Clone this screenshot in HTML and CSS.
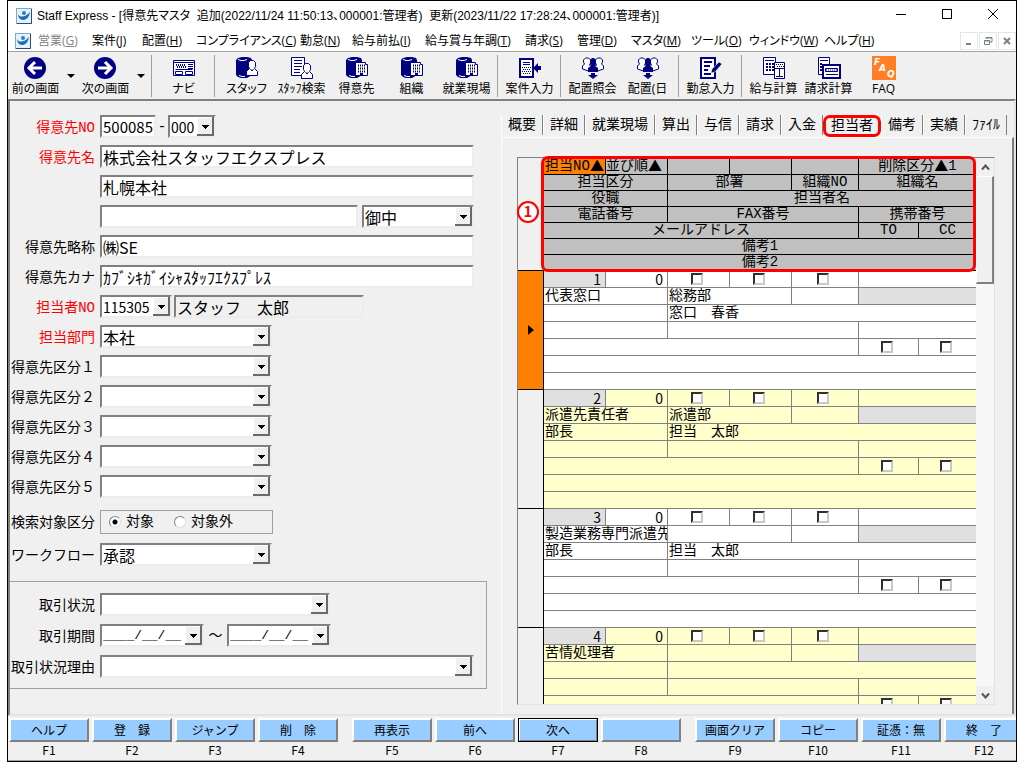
FILE: index.html
```html
<!DOCTYPE html>
<html lang="ja">
<head>
  <meta charset="UTF-8" />
  <meta name="viewport" content="width=device-width, initial-scale=1.0"/>
  <title>Staff Express - 得意先マスタ</title>
  <link rel="stylesheet" href="styles.css">
</head>
<body>
  <!-- アイコン定義 -->
  <svg class="defs" aria-hidden="true">
    <symbol id="app" viewBox="0 0 16 16">
      <rect x="0.5" y="0.5" width="15" height="15" fill="#e4f1fa" stroke="#7fa9cc"/>
      <path d="M15.500 1v14.500H1" fill="none" stroke="#1f4f86"/>
      <path d="M2 6c1 3 5 3 6 2 2 0 4-2 6-4-1 6-4 8-7 8-3 0-5-3-5-6z" fill="#1b6fb5"/>
      <circle cx="8" cy="5" r="2" fill="#2c7fc0"/>
    </symbol>
    <symbol id="binder" viewBox="0 0 24 24">
      <path d="M1 4l2-2 4-1h5l4 1 1 2v15l-5 3H6l-3-1-2-2z" fill="#000080"/>
      <path d="M3 3.500l3 1h3l3-1" fill="none" stroke="#fff"/>
      <path d="M4 19.500l3 1h3" fill="none" stroke="#fff"/>
    </symbol>
    <symbol id="person" viewBox="0 0 24 24">
      <path d="M11.500 19.500v-4l3-3-1-2v-4l2-2h3l2 2v4l-1 2 3 3v4z" fill="#fff" stroke="#000080"/>
      <path d="M15.500 13l1.500 2 1.500-2" fill="none" stroke="#000080"/>
    </symbol>
    <symbol id="client" viewBox="0 0 24 24">
      <use href="#binder"/>
      <path d="M10.500 19.500v-13h10v2h2v11z" fill="#fff" stroke="#000080"/>
      <path d="M13 9.500h7M13 12.500h7M13 15.500h7" stroke="#000080" stroke-width="2" stroke-dasharray="1 1"/>
      <rect x="15" y="17" width="3" height="3" fill="#000080"/>
    </symbol>
    <symbol id="placement" viewBox="0 0 24 24">
      <g fill="#fff" stroke="#000080">
        <path d="M1.500 13v-3l2-2-1-2V4l2-2h3l2 2v3l-1 2 2 2v3l-3 1z"/>
        <path d="M22.500 13v-3l-2-2 1-2V4l-2-2h-3l-2 2v3l1 2-2 2v3l3 1z"/>
      </g>
      <path d="M7 16v-4l3-2-1-2V4l2-2h2l2 2v4l-1 2 3 2v4z" fill="#000080"/>
      <path d="M10 17h4v2h3l-5 4-5-4h3z" fill="#000080"/>
    </symbol>
  </svg>

  <div class="window">
    <header class="titlebar">
      <svg class="app-icon"><use href="#app"/></svg>
      <h1>Staff Express - [得意先マスタ&nbsp; 追加(2022/11/24 11:50:13、000001:管理者)&nbsp; 更新(2023/11/22 17:28:24、000001:管理者)]</h1>
      <div class="window-buttons">
        <button aria-label="最小化"><svg width="12" height="12"><path d="M1 6.500h10" stroke="#000"/></svg></button>
        <button aria-label="最大化"><svg width="12" height="12"><rect x="1.500" y="1.500" width="9" height="9" fill="none" stroke="#000"/></svg></button>
        <button aria-label="閉じる"><svg width="12" height="12"><path d="M1 1l10 10M11 1L1 11" stroke="#000"/></svg></button>
      </div>
    </header>

    <nav class="menubar">
      <svg class="app-icon"><use href="#app"/></svg>
      <div class="menus">
        <button disabled>営業(<u>G</u>)</button>
        <button>案件(<u>J</u>)</button>
        <button>配置(<u>H</u>)</button>
        <button>コンプライアンス(<u>C</u>)</button>
        <button>勤怠(<u>N</u>)</button>
        <button>給与前払(<u>I</u>)</button>
        <button>給与賞与年調(<u>T</u>)</button>
        <button>請求(<u>S</u>)</button>
        <button>管理(<u>D</u>)</button>
        <button>マスタ(<u>M</u>)</button>
        <button>ツール(<u>O</u>)</button>
        <button>ウィンドウ(<u>W</u>)</button>
        <button>ヘルプ(<u>H</u>)</button>
      </div>
      <div class="mdi-buttons">
        <button aria-label="最小化"><svg width="10" height="10"><path d="M2 8h5" stroke="#75828e" stroke-width="2"/></svg></button>
        <button aria-label="元に戻す"><svg width="10" height="10"><path d="M3 3V1.500h6V6H7M3 2h6M1.500 4.500h5v4h-5zM1 5h6" fill="none" stroke="#75828e"/></svg></button>
        <button aria-label="閉じる"><svg width="10" height="10"><path d="M2 2l6 6M8 2L2 8" stroke="#75828e" stroke-width="2"/></svg></button>
      </div>
    </nav>

    <div class="toolbar">
      <button class="tool">
        <svg><circle cx="11" cy="12" r="11" fill="#000080"/><path d="M5 12h13M11 6l-6 6 6 6" fill="none" stroke="#fff" stroke-width="3"/></svg>
        前の画面
      </button>
      <button class="drop" aria-label="前の画面の履歴"></button>
      <button class="tool">
        <svg><circle cx="11" cy="12" r="11" fill="#000080"/><path d="M4 12h13M11 6l6 6-6 6" fill="none" stroke="#fff" stroke-width="3"/></svg>
        次の画面
      </button>
      <button class="drop" aria-label="次の画面の履歴"></button>
      <span class="sep"></span>
      <button class="tool">
        <svg>
          <path d="M1.500 4.500h21v15h-21zM1 6.500h22M3.500 13.500h17M3.500 15.500h7v3h-7zM13.500 15.500h7v3h-7z" fill="#fff" stroke="#000080"/>
          <path d="M4 9h10M5 11h10" stroke="#000080" stroke-width="2" stroke-dasharray="1 1"/>
          <path d="M16 8.500h5M16 10.500h5M16 12.500h5" stroke="#000080"/>
        </svg>
        ナビ
      </button>
      <span class="sep"></span>
      <button class="tool"><svg><use href="#binder"/><use href="#person"/></svg>スタッフ</button>
      <button class="tool">
        <svg>
          <path d="M1.500 1.500h13v18h-13z" fill="#fff" stroke="#000080"/>
          <path d="M4 4.500h8M4 7.500h8M4 10.500h8M4 13.500h6M4 16.500h6" stroke="#000080"/>
          <use href="#person" y="3"/>
        </svg>
        ｽﾀｯﾌ検索
      </button>
      <button class="tool"><svg><use href="#client"/></svg>得意先</button>
      <button class="tool"><svg><use href="#client"/></svg>組織</button>
      <button class="tool"><svg><use href="#client"/></svg>就業現場</button>
      <span class="sep"></span>
      <button class="tool">
        <svg>
          <rect x="2" y="3" width="13" height="18" fill="#fff" stroke="#000080" stroke-width="2"/>
          <path d="M5 6.500h7M5 8.500h7" stroke="#000080"/>
          <path d="M4 11.500h9M5 13.500h8M4 15.500h9M5 17.500h8" stroke="#000080" stroke-dasharray="1 1"/>
          <path d="M15 12l5-5v3h3v4h-3v3z" fill="#000080"/>
        </svg>
        案件入力
      </button>
      <span class="sep"></span>
      <button class="tool"><svg><use href="#placement"/></svg>配置照会</button>
      <button class="tool"><svg><use href="#placement"/></svg>配置(日</button>
      <span class="sep"></span>
      <button class="tool">
        <svg>
          <path d="M2 2h14v20H2z" fill="#fff" stroke="#000080" stroke-width="2"/>
          <path d="M5 6h8M5 10h6M5 14h4M5 18h7" stroke="#000080" stroke-width="2"/>
          <path d="M12 17l1-4 7-7 3 2-7 8z" fill="#000080" stroke="#fff" stroke-width="0.500"/>
        </svg>
        勤怠入力
      </button>
      <span class="sep"></span>
      <button class="tool">
        <svg>
          <path d="M1.500 1.500h12v17h-12zM3 4.500h9" fill="#fff" stroke="#000080"/>
          <path d="M4 8h8M4 11h8M4 14h8" stroke="#000080" stroke-width="2" stroke-dasharray="2 1"/>
          <path d="M12.500 6.500h10v16h-10zM12 12.500h11M17.500 12v8M14 20.500h7" fill="#fff" stroke="#000080"/>
          <path d="M14 8.500h7M15 10.500h7" stroke="#000080" stroke-dasharray="1 1"/>
        </svg>
        給与計算
      </button>
      <button class="tool">
        <svg>
          <path d="M1.500 1.500h11v17h-11zM3 4.500h8" fill="#fff" stroke="#000080"/>
          <path d="M3 8h3M3 11h3M3 14h3" stroke="#000080" stroke-width="2" stroke-dasharray="2 1"/>
          <rect x="6" y="9" width="17" height="13" fill="#fff" stroke="#000080" stroke-width="2"/>
          <path d="M8.500 12.500h12v3h-12zM9 18.500h12" fill="none" stroke="#000080"/>
          <path d="M9 14h11" stroke="#000080" stroke-dasharray="1 1"/>
        </svg>
        請求計算
      </button>
      <button class="tool">
        <svg>
          <rect width="24" height="24" fill="#ff7f27"/>
          <g class="faq"><text x="2" y="9">F</text><text x="7" y="15">A</text><text x="15" y="21">Q</text></g>
        </svg>
        FAQ
      </button>
    </div>

    <main class="content">
      <form class="customer">
        <div class="row">
          <label class="required" for="customerNo">得意先NO</label>
          <input id="customerNo" class="field w-no" value="500085">
          <span>-</span>
          <select class="field combo w-branch" aria-label="枝番"><option>000</option></select>
        </div>
        <div class="row">
          <label class="required" for="customerName">得意先名</label>
          <input id="customerName" class="field w-full" value="株式会社スタッフエクスプレス">
        </div>
        <div class="row">
          <label></label>
          <input class="field w-full" aria-label="得意先名2" value="札幌本社">
        </div>
        <div class="row">
          <label></label>
          <input class="field w-name3" aria-label="得意先名3">
          <select class="field combo w-honor" aria-label="敬称"><option>御中</option></select>
        </div>
        <div class="row">
          <label for="shortName">得意先略称</label>
          <input id="shortName" class="field w-full" value="㈱SE">
        </div>
        <div class="row">
          <label for="kana">得意先カナ</label>
          <input id="kana" class="field w-full" value="ｶﾌﾞｼｷｶﾞｲｼｬｽﾀｯﾌｴｸｽﾌﾟﾚｽ">
        </div>
        <div class="row">
          <label class="required" for="staffNo">担当者NO</label>
          <select id="staffNo" class="field combo w-staff"><option>115305</option></select>
          <input class="field w-staffname" aria-label="担当者名" value="スタッフ　太郎" readonly>
        </div>
        <div class="row">
          <label class="required" for="dept">担当部門</label>
          <select id="dept" class="field combo w-kubun"><option>本社</option></select>
        </div>
        <div class="row">
          <label for="kubun1">得意先区分１</label>
          <select id="kubun1" class="field combo w-kubun"><option></option></select>
        </div>
        <div class="row">
          <label for="kubun2">得意先区分２</label>
          <select id="kubun2" class="field combo w-kubun"><option></option></select>
        </div>
        <div class="row">
          <label for="kubun3">得意先区分３</label>
          <select id="kubun3" class="field combo w-kubun"><option></option></select>
        </div>
        <div class="row">
          <label for="kubun4">得意先区分４</label>
          <select id="kubun4" class="field combo w-kubun"><option></option></select>
        </div>
        <div class="row">
          <label for="kubun5">得意先区分５</label>
          <select id="kubun5" class="field combo w-kubun"><option></option></select>
        </div>
        <div class="row search-row">
          <span class="caption">検索対象区分</span>
          <div class="radios">
            <label><input type="radio" name="target" checked>対象</label>
            <label><input type="radio" name="target">対象外</label>
          </div>
        </div>
        <div class="row">
          <label for="workflow">ワークフロー</label>
          <select id="workflow" class="field combo w-kubun"><option>承認</option></select>
        </div>

        <div class="deal">
          <div class="row">
            <label for="dealState">取引状況</label>
            <select id="dealState" class="field combo w-deal"><option></option></select>
          </div>
          <div class="row">
            <label for="dealFrom">取引期間</label>
            <input id="dealFrom" class="field combo date" value="____/__/__">
            <span>～</span>
            <input class="field combo date" aria-label="取引期間 終了" value="____/__/__">
          </div>
          <div class="row">
            <label for="dealReason">取引状況理由</label>
            <select id="dealReason" class="field combo w-full"><option></option></select>
          </div>
        </div>
      </form>

      <section class="detail">
        <div class="tabs" role="tablist">
          <button role="tab">概要</button>
          <button role="tab">詳細</button>
          <button role="tab">就業現場</button>
          <button role="tab">算出</button>
          <button role="tab">与信</button>
          <button role="tab">請求</button>
          <button role="tab">入金</button>
          <button role="tab" class="marked" aria-selected="true">担当者</button>
          <button role="tab">備考</button>
          <button role="tab">実績</button>
          <button role="tab">ﾌｧｲﾙ</button>
        </div>
        <div class="tab-page">
          <div class="grid">
            <div class="grid-body">
              <table>
                <colgroup>
                  <col class="c-head"><col class="c-std"><col class="c-std"><col class="c-std"><col class="c-std"><col class="c-org"><col class="c-to"><col>
                </colgroup>
                <thead>
                  <tr><td rowspan="7" class="corner"></td><th class="sorted">担当NO<i>▲</i></th><th class="left">並び順<i>▲</i></th><th></th><th></th><th></th><th colspan="2">削除区分<i>▲</i>1</th></tr>
                  <tr><th colspan="2">担当区分</th><th colspan="2">部署</th><th>組織NO</th><th colspan="2">組織名</th></tr>
                  <tr><th colspan="2">役職</th><th colspan="5">担当者名</th></tr>
                  <tr><th colspan="2">電話番号</th><th colspan="3">FAX番号</th><th colspan="2">携帯番号</th></tr>
                  <tr><th colspan="5">メールアドレス</th><th>TO</th><th>CC</th></tr>
                  <tr><th colspan="7">備考1</th></tr>
                  <tr><th colspan="7">備考2</th></tr>
                </thead>
                <tbody>
                  <tr><td rowspan="7" class="rowhead current"></td><td class="num lock">1</td><td class="num">0</td><td class="chk"><input type="checkbox" aria-label="区分1"></td><td class="chk"><input type="checkbox" aria-label="区分2"></td><td class="chk"><input type="checkbox" aria-label="区分3"></td><td colspan="2"></td></tr>
                  <tr><td colspan="2">代表窓口</td><td colspan="2">総務部</td><td></td><td colspan="2" class="lock"></td></tr>
                  <tr><td colspan="2"></td><td colspan="5">窓口　春香</td></tr>
                  <tr><td colspan="2"></td><td colspan="3"></td><td colspan="2"></td></tr>
                  <tr><td colspan="5"></td><td class="chk"><input type="checkbox" aria-label="TO"></td><td class="chk"><input type="checkbox" aria-label="CC"></td></tr>
                  <tr><td colspan="7"></td></tr>
                  <tr><td colspan="7"></td></tr>
                </tbody>
                <tbody class="alt">
                  <tr><td rowspan="7" class="rowhead"></td><td class="num lock">2</td><td class="num">0</td><td class="chk"><input type="checkbox" aria-label="区分1"></td><td class="chk"><input type="checkbox" aria-label="区分2"></td><td class="chk"><input type="checkbox" aria-label="区分3"></td><td colspan="2"></td></tr>
                  <tr><td colspan="2">派遣先責任者</td><td colspan="2">派遣部</td><td></td><td colspan="2" class="lock"></td></tr>
                  <tr><td colspan="2">部長</td><td colspan="5">担当　太郎</td></tr>
                  <tr><td colspan="2"></td><td colspan="3"></td><td colspan="2"></td></tr>
                  <tr><td colspan="5"></td><td class="chk"><input type="checkbox" aria-label="TO"></td><td class="chk"><input type="checkbox" aria-label="CC"></td></tr>
                  <tr><td colspan="7"></td></tr>
                  <tr><td colspan="7"></td></tr>
                </tbody>
                <tbody>
                  <tr><td rowspan="7" class="rowhead"></td><td class="num lock">3</td><td class="num">0</td><td class="chk"><input type="checkbox" aria-label="区分1"></td><td class="chk"><input type="checkbox" aria-label="区分2"></td><td class="chk"><input type="checkbox" aria-label="区分3"></td><td colspan="2"></td></tr>
                  <tr><td colspan="2">製造業務専門派遣先</td><td colspan="2"></td><td></td><td colspan="2" class="lock"></td></tr>
                  <tr><td colspan="2">部長</td><td colspan="5">担当　太郎</td></tr>
                  <tr><td colspan="2"></td><td colspan="3"></td><td colspan="2"></td></tr>
                  <tr><td colspan="5"></td><td class="chk"><input type="checkbox" aria-label="TO"></td><td class="chk"><input type="checkbox" aria-label="CC"></td></tr>
                  <tr><td colspan="7"></td></tr>
                  <tr><td colspan="7"></td></tr>
                </tbody>
                <tbody class="alt">
                  <tr><td rowspan="7" class="rowhead"></td><td class="num lock">4</td><td class="num">0</td><td class="chk"><input type="checkbox" aria-label="区分1"></td><td class="chk"><input type="checkbox" aria-label="区分2"></td><td class="chk"><input type="checkbox" aria-label="区分3"></td><td colspan="2"></td></tr>
                  <tr><td colspan="2">苦情処理者</td><td colspan="2"></td><td></td><td colspan="2" class="lock"></td></tr>
                  <tr><td colspan="2"></td><td colspan="5"></td></tr>
                  <tr><td colspan="2"></td><td colspan="3"></td><td colspan="2"></td></tr>
                  <tr><td colspan="5"></td><td class="chk"><input type="checkbox" aria-label="TO"></td><td class="chk"><input type="checkbox" aria-label="CC"></td></tr>
                  <tr><td colspan="7"></td></tr>
                  <tr><td colspan="7"></td></tr>
                </tbody>
              </table>
            </div>
            <div class="scrollbar">
              <button type="button" aria-label="上へ"><svg width="9" height="7"><path d="M1 5.500l3.500-4 3.500 4" fill="none" stroke="#555" stroke-width="2"/></svg></button>
              <div class="thumb"></div>
              <button type="button" class="down" aria-label="下へ"><svg width="9" height="7"><path d="M1 1.500l3.500 4 3.500-4" fill="none" stroke="#555" stroke-width="2"/></svg></button>
            </div>
            <!-- 見出し部の説明枠 -->
            <div class="callout"></div>
            <svg class="callout-no" viewBox="0 0 22 22">
              <circle cx="11" cy="11" r="10" fill="#fff" stroke="#f00" stroke-width="2"/>
              <text x="11" y="16" text-anchor="middle">1</text>
            </svg>
          </div>
        </div>
      </section>
    </main>

    <footer class="fkeys">
      <div class="fgroup">
        <div class="fkey"><button>ヘルプ</button><span>F1</span></div>
        <div class="fkey"><button>登　録</button><span>F2</span></div>
        <div class="fkey"><button>ジャンプ</button><span>F3</span></div>
        <div class="fkey"><button>削　除</button><span>F4</span></div>
      </div>
      <div class="fgroup">
        <div class="fkey"><button>再表示</button><span>F5</span></div>
        <div class="fkey"><button>前へ</button><span>F6</span></div>
        <div class="fkey"><button class="default">次へ</button><span>F7</span></div>
        <div class="fkey"><button aria-label="F8"></button><span>F8</span></div>
      </div>
      <div class="fgroup">
        <div class="fkey"><button>画面クリア</button><span>F9</span></div>
        <div class="fkey"><button>コピー</button><span>F10</span></div>
        <div class="fkey"><button>証憑：無</button><span>F11</span></div>
        <div class="fkey"><button>終　了</button><span>F12</span></div>
      </div>
    </footer>
  </div>
</body>
</html>
```

FILE: styles.css
```css
* {
  box-sizing: border-box;
}

body {
  margin: 0;
  background-color: white;
  color: black;
  font-family: "Liberation Mono", "Noto Sans CJK JP", monospace;
  font-size: 14px;
  line-height: 16px;
}

button {
  margin: 0;
  padding: 0;
  border: 0;
  background: none;
  color: inherit;
  font: inherit;
}

.defs {
  display: none;
}

.window {
  display: flex;
  flex-direction: column;
  height: 100vh;
  margin: 0 6px 0 7px;
  border: 1px solid black;
  background-color: #f0f0f0;
  overflow: hidden;
}

/* タイトルバー・メニュー */
.titlebar, .menubar, .toolbar {
  font-family: "Open Sans", "Noto Sans CJK JP", sans-serif;
  font-size: 12px;
  font-feature-settings: "palt";
}

.titlebar, .menubar {
  display: flex;
  align-items: center;
  flex: none;
  background-color: white;
}

.titlebar {
  height: 29px;
  padding-left: 8px;
}

.titlebar h1 {
  flex: 1;
  margin: 0 0 0 5px;
  font-family: "Liberation Sans", "Noto Sans CJK JP", sans-serif;
  font-size: 12px;
  font-weight: normal;
  white-space: nowrap;
}

.app-icon {
  flex: none;
  width: 16px;
  height: 16px;
}

.window-buttons {
  display: flex;
}

.window-buttons button {
  width: 46px;
  height: 28px;
}

.menubar {
  height: 21px;
  padding-left: 7px;
}

.menus {
  display: grid;
  grid-template-columns: 54px 50px 54px 104px 52px 73px 100px 52px 54px 60px 58px 75px 60px;
  flex: 1;
  margin-left: 7px;
}

.menus button {
  text-align: left;
  white-space: nowrap;
}

.menus button:disabled {
  color: #838383;
}

.mdi-buttons {
  display: flex;
  gap: 1px;
}

.mdi-buttons button {
  display: flex;
  align-items: center;
  justify-content: center;
  width: 18px;
  height: 18px;
  border: 1px solid #e5e5e5;
}

/* ツールバー */
.toolbar {
  display: flex;
  flex: none;
  height: 48px;
  border-top: 1px solid #a0a0a0;
}

.tool {
  display: flex;
  flex-direction: column;
  align-items: center;
  gap: 1px;
  flex: 0 0 55px;
  padding-top: 4px;
  white-space: nowrap;
}

.tool svg {
  width: 24px;
  height: 24px;
}

.faq {
  fill: white;
  font: italic bold 9px "DejaVu Sans", sans-serif;
}

.drop {
  display: flex;
  align-items: center;
  justify-content: center;
  flex: 0 0 15px;
}

.drop::before {
  content: "";
  border: 4px solid transparent;
  border-top-color: black;
  border-bottom: 0;
}

.sep {
  flex: 0 0 8px;
  margin: 3px 0 2px;
  background: linear-gradient(#a0a0a0, #a0a0a0) 3px 0 / 1px 100% no-repeat;
}

/* 本体 */
.content {
  display: grid;
  grid-template-columns: minmax(0, 491px) minmax(0, 1fr);
  flex: 1;
  min-height: 0;
  border: 2px solid;
  border-color: #808080 #e3e3e3 #e3e3e3 #808080;
}

.customer {
  display: flex;
  flex-direction: column;
  gap: 7px;
  padding-top: 14px;
}

.row {
  display: flex;
  align-items: center;
  height: 23px;
}

.row > label, .caption {
  flex: 0 0 85px;
  margin-right: 5px;
  padding-top: 3px;
  text-align: right;
  white-space: nowrap;
}

.row > span:not(.caption) {
  flex: 0 0 12px;
  text-align: center;
}

.required {
  color: red;
}

.field {
  height: 23px;
  margin: 0;
  padding: 0 1px;
  border: 2px solid;
  border-color: #808080 #ececec #ececec #808080;
  border-radius: 0;
  background-color: white;
  color: black;
  font-family: "Noto Sans CJK JP", sans-serif;
  font-size: 16px;
  line-height: 18px;
}

.field[readonly] {
  background-color: #f0f0f0;
}

.combo {
  appearance: none;
  padding-right: 17px;
  background-image: url("data:image/svg+xml,%3Csvg xmlns='http://www.w3.org/2000/svg' width='17' height='19'%3E%3Cpath fill='%23696969' d='M0 0h17v19H0z'/%3E%3Cpath fill='%23fff' d='M0 0h15v17H0z'/%3E%3Cpath fill='%23f0f0f0' d='M1 1h14v16H1z'/%3E%3Cpath d='M5 8h7v1h-1v1h-1v1h-1v1H8v-1H7v-1H6V9H5z'/%3E%3C/svg%3E");
  background-repeat: no-repeat;
  background-position: right top;
}

.w-full { width: 374px; }
.w-no { width: 56px; font-size: 15px; }
.w-branch { width: 48px; font-size: 14px; }
.w-name3 { width: 258px; }
.w-honor { width: 112px; margin-left: 4px; }
.w-staff { width: 72px; font-size: 14px; }
.w-staffname { width: 190px; margin-left: 2px; }
.w-kubun { width: 172px; }
.w-deal { width: 230px; }

.date {
  width: 104px;
  font-family: "Liberation Mono", monospace;
  font-size: 13px;
}

.search-row {
  margin: 5px 0 3px;
}

.radios {
  display: flex;
  align-items: center;
  gap: 20px;
  width: 173px;
  height: 24px;
  padding-left: 8px;
  border: 1px solid #a0a0a0;
}

.radios label {
  display: flex;
  align-items: center;
  gap: 5px;
}

.radios input {
  appearance: none;
  width: 12px;
  height: 12px;
  margin: 0;
  border: 1px solid;
  border-color: #808080 #e0e0e0 #e0e0e0 #808080;
  border-radius: 50%;
  background-color: white;
}

.radios input:checked {
  background-image: radial-gradient(circle, black 2px, transparent 3px);
}

.deal {
  display: flex;
  flex-direction: column;
  gap: 8px;
  width: 477px;
  margin-top: 8px;
  padding: 11px 0 10px;
  border: 1px solid #a0a0a0;
  border-left: 0;
}

.deal .row > span {
  flex-basis: 23px;
}

/* タブ */
.detail {
  display: flex;
  flex-direction: column;
  min-width: 0;
  min-height: 0;
  padding-top: 14px;
}

.tabs {
  display: flex;
}

.tabs button {
  height: 20px;
  padding: 0 6px;
  border-left: 1px solid white;
  border-right: 1px solid #808080;
  white-space: nowrap;
}

.tabs .marked {
  height: 22px;
  padding: 0 5px;
  border: 3px solid red;
  border-radius: 7px;
}

.tab-page {
  display: flex;
  flex: 1;
  min-height: 0;
  padding: 19px 17px 9px 15px;
  border-top: 1px solid white;
  border-left: 1px solid white;
  border-right: 2px solid #808080;
}

.grid {
  position: relative;
  display: flex;
  flex: 1;
  min-width: 0;
  border: 1px solid #808080;
  border-color: #808080 #e3e3e3 #e3e3e3 #808080;
}

.grid-body {
  flex: 1;
  min-width: 0;
  padding-top: 1px;
  overflow: hidden;
}

table {
  width: 100%;
  border-spacing: 0;
  table-layout: fixed;
}

.c-head { width: 26px; }
.c-std { width: 62px; }
.c-org { width: 67px; }
.c-to { width: 60px; }

th, td {
  height: 17px;
  padding: 0 1px;
  border-right: 1px solid #808080;
  border-bottom: 1px solid #808080;
  background-color: white;
  font-weight: normal;
  line-height: 16px;
  white-space: nowrap;
}

td {
  overflow: hidden;
}

th {
  height: 16px;
  padding: 0;
  border-color: black;
  background-color: #c0c0c0;
  line-height: 15px;
}

th i {
  font-family: "Noto Sans CJK JP", sans-serif;
  font-style: normal;
  line-height: 12px;
  vertical-align: top;
}

.left {
  text-align: left;
}

.sorted {
  background-color: #ff8000;
}

tr > :last-child {
  border-right: 0;
}

.alt td {
  background-color: #ffffcc;
}

tbody td.lock {
  background-color: #e0e0e0;
}

td.corner, td.rowhead {
  border-right: 1px solid black;
  border-bottom: 1px solid black;
  background-color: #f0f0f0;
}

td.current {
  background-color: #ff8000;
}

.current::before {
  content: "";
  display: block;
  width: 0;
  margin-left: 9px;
  border: 5px solid transparent;
  border-left: 6px solid black;
  border-right: 0;
}

td.num {
  padding-right: 4px;
  font-family: "Noto Sans CJK JP", sans-serif;
  text-align: right;
}

.chk {
  text-align: center;
  line-height: 0;
}

.chk input {
  appearance: none;
  width: 12px;
  height: 12px;
  margin: 0 4px 0 0;
  border: 2px solid;
  border-color: #303030 #c8c8c8 #c8c8c8 #303030;
  background-color: white;
  vertical-align: middle;
}

.scrollbar {
  display: flex;
  flex-direction: column;
  flex: 0 0 18px;
  background-color: #f7f7f7;
}

.scrollbar button {
  height: 18px;
  background-color: #f0f0f0;
}

.thumb {
  height: 108px;
  border: 1px solid white;
  border-right: 2px solid #808080;
  border-bottom: 2px solid #808080;
  background-color: #f0f0f0;
}

.scrollbar .down {
  margin-top: auto;
}

.callout {
  position: absolute;
  top: -2px;
  left: 23px;
  right: 18px;
  height: 116px;
  border: 3px solid red;
  border-radius: 7px;
}

.callout-no {
  position: absolute;
  top: 43px;
  left: -1px;
  width: 22px;
  height: 22px;
  fill: red;
  font: bold 14px "Noto Sans CJK JP", sans-serif;
}

/* ファンクションキー */
.fkeys {
  display: flex;
  gap: 14px;
  flex: none;
  padding: 2px 0 1px 1px;
  border-bottom: 1px solid #a0a0a0;
}

.fgroup {
  display: flex;
  gap: 3px;
}

.fkey {
  width: 80px;
  text-align: center;
}

.fkey button {
  display: block;
  width: 100%;
  height: 24px;
  border: 2px solid;
  border-color: white #808080 #808080 white;
  background-color: #99ccff;
  font-family: "Noto Sans CJK JP", sans-serif;
  font-size: 12px;
  line-height: 18px;
}

.fkey .default {
  outline: 1px solid black;
  outline-offset: -1px;
}

.fkey span {
  font-family: "Noto Sans CJK JP", sans-serif;
  font-size: 12px;
}
```
